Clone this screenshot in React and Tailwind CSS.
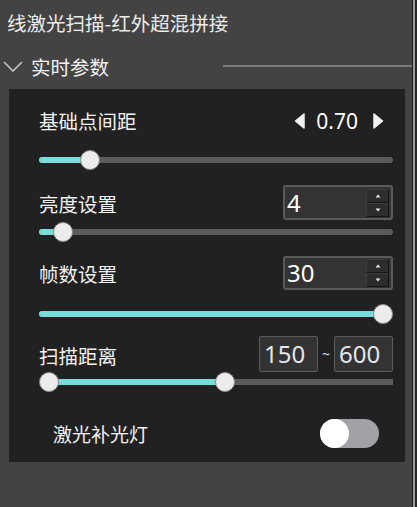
import React from "react";

const CJK = { fontFamily: '"Noto Sans CJK SC", "Noto Sans", sans-serif' };
const NUM = { fontFamily: '"Noto Sans", "Open Sans", sans-serif' };

function Slider({ value }) {
  // thumb center from 10 to trackWidth-10
  const pct = value;
  return (
    <div className="relative h-[20px] w-full">
      <div className="absolute left-0 right-0 top-[7px] h-[6px] rounded-full bg-[#5b5b5b]" />
      <div
        className="absolute left-0 top-[7px] h-[6px] rounded-full bg-[#78dcdb]"
        style={{ width: `calc(10px + (100% - 20px) * ${pct})` }}
      />
      <div
        className="absolute top-0 h-[20px] w-[20px] rounded-full border border-[#8a8a8a] bg-[#ececec]"
        style={{ left: `calc((100% - 20px) * ${pct})` }}
      />
    </div>
  );
}

function RangeSlider({ a, b }) {
  return (
    <div className="relative h-[20px] w-full">
      <div className="absolute left-[10px] right-0 top-[7px] h-[6px] bg-[#5b5b5b]" />
      <div
        className="absolute top-[7px] h-[6px] bg-[#78dcdb]"
        style={{
          left: `calc(10px + (100% - 20px) * ${a})`,
          width: `calc((100% - 20px) * ${b - a})`,
        }}
      />
      <div
        className="absolute top-0 h-[20px] w-[20px] rounded-full border border-[#8a8a8a] bg-[#ececec]"
        style={{ left: `calc((100% - 20px) * ${a})` }}
      />
      <div
        className="absolute top-0 h-[20px] w-[20px] rounded-full border border-[#8a8a8a] bg-[#ececec]"
        style={{ left: `calc((100% - 20px) * ${b})` }}
      />
    </div>
  );
}

function SpinButton({ up }) {
  return (
    <div className="flex h-[14px] w-[23px] items-center justify-center border-b border-r border-[#151515] border-t border-l border-t-[#3c3c3c] border-l-[#3c3c3c] bg-[#2c2c2c]">
      <svg width="6" height="4" viewBox="0 0 6 4">
        {up ? (
          <polygon points="3,0.5 5.5,3.5 0.5,3.5" fill="#e8e8e8" />
        ) : (
          <polygon points="0.5,0.5 5.5,0.5 3,3.5" fill="#e8e8e8" />
        )}
      </svg>
    </div>
  );
}

function SpinBox({ value, h = 35 }) {
  return (
    <div
      className="flex w-[110px] items-center justify-between rounded-[3px] border-2 border-[#5a5a5a] bg-[#333333] pl-[2px] pr-[2px]"
      style={{ height: h }}
    >
      <span className="text-[24px] leading-[28px] text-white" style={NUM}>
        {value}
      </span>
      <div className="flex flex-col">
        <SpinButton up />
        <SpinButton />
      </div>
    </div>
  );
}

function NumBox({ value }) {
  return (
    <div className="flex h-[36px] w-[59px] items-center rounded-[2px] border-[1.5px] border-[#5c5c5c] bg-[#333333] pl-[4px]">
      <span className="text-[24px] leading-[28px] text-[#e4e6ee]" style={NUM}>
        {value}
      </span>
    </div>
  );
}

function Tri({ dir }) {
  return (
    <svg width="11" height="16" viewBox="0 0 11 16">
      {dir === "left" ? (
        <polygon
          points="10,1 10,15 1.5,8"
          fill="#f2f2f2"
          stroke="#f2f2f2"
          strokeWidth="1.5"
          strokeLinejoin="round"
        />
      ) : (
        <polygon
          points="1,1 1,15 9.5,8"
          fill="#f2f2f2"
          stroke="#f2f2f2"
          strokeWidth="1.5"
          strokeLinejoin="round"
        />
      )}
    </svg>
  );
}

export default function App() {
  return (
    <div className="flex h-[507px] w-[417px] overflow-hidden bg-[#434343]" style={CJK}>
      <div className="flex w-[412px] flex-col">
        {/* Title */}
        <div className="flex h-[45px] items-center pl-[7px] pt-[1px]">
          <span className="text-[19.5px] leading-[24px] text-[#ececec]">
            线激光扫描-红外超混拼接
          </span>
        </div>
        {/* Section header */}
        <div className="flex h-[44px] items-center">
          <svg className="ml-[3px] mt-[-1px]" width="20" height="11" viewBox="0 0 20 11">
            <polyline
              points="1,1 10,10 19,1"
              fill="none"
              stroke="#c4c4c4"
              strokeWidth="1.6"
            />
          </svg>
          <span className="ml-[8px] text-[19.5px] leading-[24px] text-[#f2f2f2]">实时参数</span>
          <div className="ml-[114px] mt-[-2px] h-[1.5px] flex-1 bg-[#7a7a7a]" />
        </div>
        {/* Panel */}
        <div className="ml-[9px] flex h-[373px] w-[396px] flex-col bg-[#212121] pl-[30px] pr-[12px] pt-[20px]">
          <div className="flex h-[24px] items-center justify-between">
            <span className="text-[19.5px] leading-[24px] text-[#f2f2f2]">基础点间距</span>
            <div className="mr-[9px] flex items-center">
              <Tri dir="left" />
              <span className="ml-[11px] mr-[15px] text-[21px] leading-[24px] text-white" style={NUM}>
                0.70
              </span>
              <Tri dir="right" />
            </div>
          </div>
          <div className="mt-[17px]">
            <Slider value={0.123} />
          </div>
          <div className="mt-[15px] flex h-[35px] items-center justify-between">
            <span className="pt-[3px] text-[19.5px] leading-[24px] text-[#f2f2f2]">亮度设置</span>
            <SpinBox value="4" h={35} />
          </div>
          <div className="mt-[2px]">
            <Slider value={0.042} />
          </div>
          <div className="mt-[14px] flex h-[34px] items-center justify-between">
            <span className="pt-[1px] text-[19.5px] leading-[24px] text-[#f2f2f2]">帧数设置</span>
            <SpinBox value="30" h={34} />
          </div>
          <div className="mt-[14px]">
            <Slider value={1} />
          </div>
          <div className="mt-[12px] flex h-[36px] items-center justify-between">
            <span className="pt-[4px] text-[19.5px] leading-[24px] text-[#f2f2f2]">扫描距离</span>
            <div className="flex items-center">
              <NumBox value="150" />
              <span className="w-[16px] text-center text-[14px] leading-[20px] text-[#dddddd]" style={NUM}>
                ~
              </span>
              <NumBox value="600" />
            </div>
          </div>
          <div>
            <RangeSlider a={0} b={0.527} />
          </div>
          <div className="ml-[14px] mr-[14px] mt-[27px] flex h-[29px] items-center justify-between">
            <span className="pt-[1px] text-[19px] leading-[24px] text-[#f2f2f2]">激光补光灯</span>
            <div className="flex h-[29px] w-[59px] items-center rounded-full bg-[#a1a1a6]">
              <div className="h-[29px] w-[29px] rounded-full bg-white" />
            </div>
          </div>
        </div>
      </div>
      <div className="w-[1px] bg-[#1e1e1e]" />
      <div className="w-[2px] bg-[#9a9a9a]" />
      <div className="w-[2px] bg-[#262626]" />
    </div>
  );
}
